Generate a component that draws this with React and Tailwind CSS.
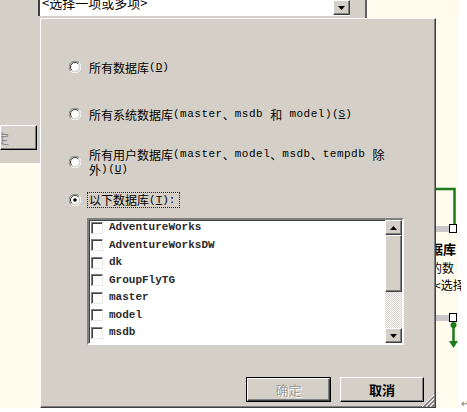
const cjk = "font-['Noto_Sans_CJK_SC','Liberation_Sans',sans-serif]"
const mono = "font-['Liberation_Mono','Noto_Sans_CJK_SC',monospace]"
const raised =
  'border border-t-white border-l-white border-r-[#404040] border-b-[#404040] shadow-[inset_-1px_-1px_#808080]'

const databases = ['AdventureWorks', 'AdventureWorksDW', 'dk', 'GroupFlyTG', 'master', 'model', 'msdb']

function Radio({ checked }) {
  return (
    <svg width="12" height="12" viewBox="0 0 12 12" className="shrink-0">
      <circle cx="6" cy="6" r="4.5" fill="#fff" />
      <path d="M10.2 1.8 A5.6 5.6 0 0 0 1.8 10.2" stroke="#808080" fill="none" />
      <path d="M1.8 10.2 A5.6 5.6 0 0 0 10.2 1.8" stroke="#fff" fill="none" />
      <path d="M9.2 2.8 A4.5 4.5 0 0 0 2.8 9.2" stroke="#404040" fill="none" />
      <path d="M2.8 9.2 A4.5 4.5 0 0 0 9.2 2.8" stroke="#d4d0c8" fill="none" />
      {checked && <circle cx="6" cy="6" r="1.8" fill="#000" />}
    </svg>
  )
}

function Key({ k }) {
  return (
    <span className={`${mono} text-[11px]`}>
      (<u className="underline-offset-1">{k}</u>)
    </span>
  )
}

function Mono({ children }) {
  return <span className={`${mono} text-[11px] tracking-[0.5px]`}>{children}</span>
}

function Line({ children }) {
  return <div className="flex h-[15px] items-center whitespace-pre leading-[15px]">{children}</div>
}

function Arrow({ up }) {
  return (
    <div className={`${raised} flex h-[15px] w-[17px] items-center justify-center bg-[#d4d0c8]`}>
      <svg width="7" height="4" viewBox="0 0 7 4">
        <path d={up ? 'M3.5 0 L7 4 L0 4 Z' : 'M0 0 L7 0 L3.5 4 Z'} fill="#000" />
      </svg>
    </div>
  )
}

function DbList() {
  return (
    <div className="ml-[18px] mt-[10px] flex h-[127px] w-[317px] shrink-0 border-2 border-t-[#808080] border-l-[#808080] border-b-white border-r-white">
      <div className="flex flex-1 flex-col bg-white shadow-[inset_1px_1px_#404040]">
        {databases.map((db) => (
          <div key={db} className="flex h-[17.5px] shrink-0 items-center gap-[6px] pl-[2px] first:mt-[-1px]">
            <div className="h-[12px] w-[12px] border border-t-[#808080] border-l-[#808080] border-b-[#e8e8e8] border-r-[#e8e8e8] bg-white shadow-[inset_1px_1px_#404040]" />
            <span className={`${mono} text-[11px] font-bold leading-none text-[#2a2a2a]`}>{db}</span>
          </div>
        ))}
      </div>
      <div className="flex w-[17px] flex-col bg-[#d4d0c8]">
        <Arrow up />
        <div className={`${raised} h-[57px] bg-[#d4d0c8]`} />
        <div className="flex-1 bg-[repeating-conic-gradient(#d4d0c8_0_25%,#ffffff_0_50%)] bg-[length:2px_2px]" />
        <Arrow />
      </div>
    </div>
  )
}

function Dialog() {
  return (
    <div className="relative flex h-[390px] w-[396px] flex-col border-l border-t border-b border-l-white border-t-white border-r border-r-[#404040] border-b-[#404040] bg-[#d4d0c8] pl-[28px] pr-[11px] text-[12px] text-black shadow-[inset_-1px_-1px_#808080]">
      <label className="mt-[40px] flex h-[16px] shrink-0 items-center gap-[8px]">
        <Radio />
        <Line>
          <span className={cjk}>所有数据库</span>
          <Key k="D" />
        </Line>
      </label>

      <label className="mt-[31px] flex h-[16px] shrink-0 items-center gap-[8px]">
        <Radio />
        <Line>
          <span className={cjk}>所有系统数据库</span>
          <Mono>(master</Mono>
          <span className={cjk}>、</span>
          <Mono>msdb </Mono>
          <span className={cjk}>和</span>
          <Mono> model)</Mono>
          <Key k="S" />
        </Line>
      </label>

      <label className="mt-[25px] flex h-[30px] shrink-0 items-center gap-[8px]">
        <Radio />
        <div className="flex flex-col">
          <Line>
            <span className={cjk}>所有用户数据库</span>
            <Mono>(master</Mono>
            <span className={cjk}>、</span>
            <Mono>model</Mono>
            <span className={cjk}>、</span>
            <Mono>msdb</Mono>
            <span className={cjk}>、</span>
            <Mono>tempdb </Mono>
            <span className={cjk}>除</span>
          </Line>
          <Line>
            <span className={cjk}>外</span>
            <Mono>)</Mono>
            <Key k="U" />
          </Line>
        </div>
      </label>

      <label className="mt-[15px] flex h-[16px] shrink-0 items-center gap-[6px]">
        <Radio checked />
        <div className="flex h-[16px] items-center border border-dotted border-[#222] pl-[1px] pr-[4px]">
          <span className={cjk}>以下数据库</span>
          <Key k="T" />
          <span className={`${mono} text-[11px]`}>:</span>
        </div>
      </label>

      <DbList />

      <div className="mt-[32px] flex shrink-0 justify-end gap-[9px]">
        <div className="flex h-[25px] w-[85px] items-center justify-center border border-black bg-[#d4d0c8]">
          <div className={`${raised} flex h-full w-full items-center justify-center`}>
            <span className={`${cjk} text-[13px] text-[#a09c94] [text-shadow:1px_1px_#fff]`}>确定</span>
          </div>
        </div>
        <div className={`${raised} flex h-[25px] w-[84px] items-center justify-center border-r-black border-b-black`}>
          <span className={`${cjk} text-[13px] font-bold text-black`}>取消</span>
        </div>
      </div>

      <svg width="15" height="15" viewBox="0 0 15 15" className="absolute bottom-[0px] right-[1px]">
        {[3, 7, 11].map((o) => (
          <g key={o}>
            <line x1={o} y1="15" x2="15" y2={o} stroke="#fff" />
            <line x1={o + 1} y1="15" x2="15" y2={o + 1} stroke="#808080" />
            <line x1={o + 2} y1="15" x2="15" y2={o + 2} stroke="#808080" />
          </g>
        ))}
      </svg>
    </div>
  )
}

function RightStrip() {
  return (
    <div className="flex flex-1 flex-col overflow-hidden bg-[linear-gradient(to_right,#fffcee_22px,#ffffff_22px)]">
      <div className="h-[169px] shrink-0" />
      <svg width="31" height="47" viewBox="0 0 31 47" className="shrink-0">
        <path d="M0 2 H18.5 V38" stroke="#1c7a1c" strokeWidth="2.5" fill="none" />
        <rect x="0" y="39" width="13" height="6" fill="#c8c8c8" />
        <rect x="13.5" y="37.5" width="7" height="8" fill="#fff" stroke="#000" />
      </svg>
      <div className={`${cjk} mt-[7px] flex w-[25px] flex-col overflow-hidden text-black`}>
        <span className="ml-[-6px] whitespace-nowrap text-[13px] font-bold leading-[16px]">据库</span>
        <span className="ml-[-6px] mt-[3px] whitespace-nowrap text-[12px] leading-[16px]">的数</span>
        <span className="ml-[-2px] mt-[1px] whitespace-nowrap text-[12px] leading-[16px]">&lt;选择</span>
      </div>
      <svg width="31" height="42" viewBox="0 0 31 42" className="mt-[19px] shrink-0">
        <rect x="0" y="3" width="13" height="6" fill="#c8c8c8" />
        <rect x="13.5" y="1.5" width="7" height="8" fill="#fff" stroke="#000" />
        <circle cx="17.5" cy="13" r="3" fill="#1c7a1c" />
        <path d="M17.5 13 V31" stroke="#1c7a1c" strokeWidth="2.5" />
        <path d="M13 29 L22 29 L17.5 36 Z" fill="#1c7a1c" />
      </svg>
      <div className="flex-1" />
      <span className="ml-[25px] text-[10px] leading-none text-[#777]">↵</span>
    </div>
  )
}

export default function App() {
  return (
    <div className={`${cjk} flex h-[412px] w-[467px] flex-col overflow-hidden bg-white`}>
      <div className="flex h-[18px] shrink-0 bg-[#d4d0c8]">
        <div className="w-[38px]" />
        <div className="flex w-[312px] flex-col">
          <div className="flex h-[16px] overflow-hidden border-l-2 border-l-[#404040] bg-white">
            <span className={`${cjk} mt-[-6px] flex-1 pl-[2px] text-[13px] leading-[18px] text-black`}>
              &lt;选择一项或多项&gt;
            </span>
            <Arrow />
          </div>
        </div>
        <div className="w-[15px]" />
        <div className="w-[2px] bg-[#606060]" />
        <div className="flex-1 bg-[linear-gradient(to_right,#fffcee_92px,#ffffff_92px)]" />
      </div>

      <div className="flex h-[390px] shrink-0">
        <div className="flex w-[40px] flex-col">
          <div className="flex h-[145px] flex-col bg-[#d4d0c8]">
            <div className="mt-[107px] flex h-[25px] w-[37px] items-center overflow-hidden border border-t-white border-l-white border-r-black border-b-black shadow-[inset_-1px_-1px_#808080]">
              <span className={`${cjk} ml-[-5px] text-[13px] text-[#8a8a8a]`}>定</span>
            </div>
          </div>
          <div className="flex-1 bg-[#fffcee]" />
        </div>
        <Dialog />
        <RightStrip />
      </div>
    </div>
  )
}
